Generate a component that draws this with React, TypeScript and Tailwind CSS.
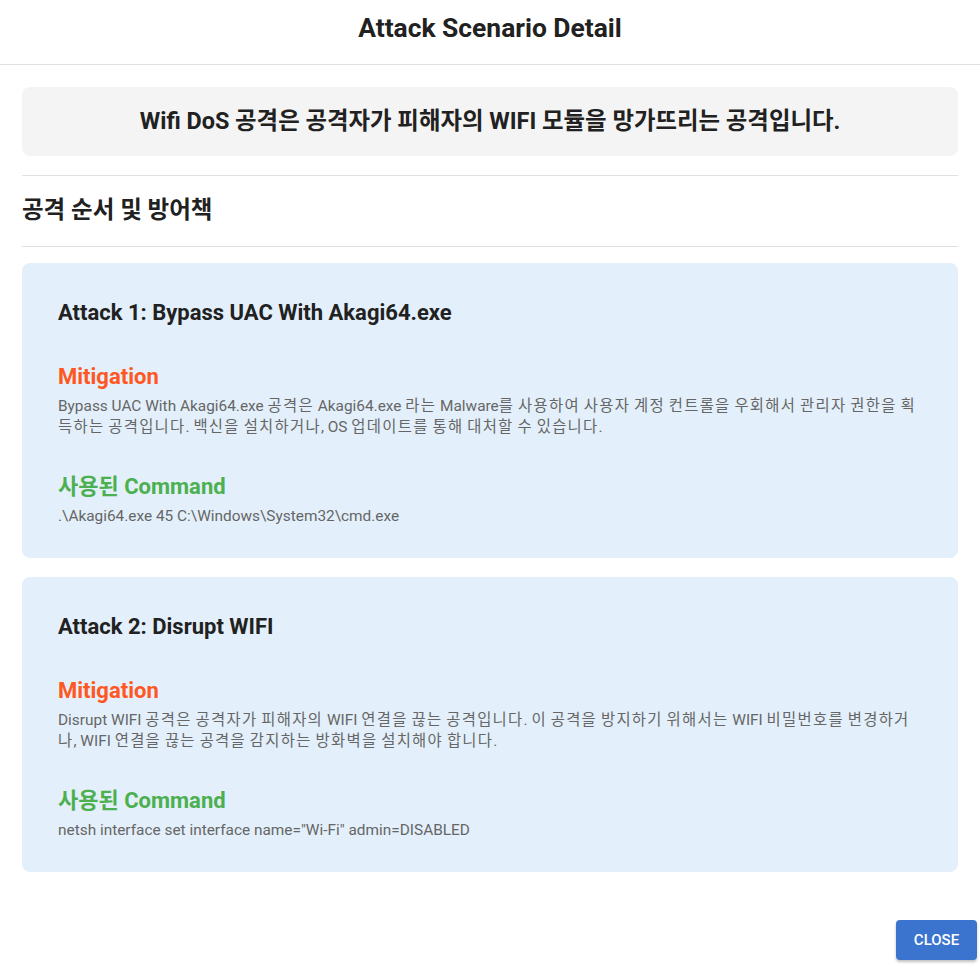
import type { ReactNode } from 'react'

const attacks = [
  {
    title: 'Attack 1: Bypass UAC With Akagi64.exe',
    mitigation:
      'Bypass UAC With Akagi64.exe 공격은 Akagi64.exe 라는 Malware를 사용하여 사용자 계정 컨트롤을 우회해서 관리자 권한을 획득하는 공격입니다. 백신을 설치하거나, OS 업데이트를 통해 대처할 수 있습니다.',
    command: '.\\Akagi64.exe 45 C:\\Windows\\System32\\cmd.exe',
  },
  {
    title: 'Attack 2: Disrupt WIFI',
    mitigation:
      'Disrupt WIFI 공격은 공격자가 피해자의 WIFI 연결을 끊는 공격입니다. 이 공격을 방지하기 위해서는 WIFI 비밀번호를 변경하거나, WIFI 연결을 끊는 공격을 감지하는 방화벽을 설치해야 합니다.',
    command: 'netsh interface set interface name="Wi-Fi" admin=DISABLED',
  },
]

// hangul in the body copy sits looser than latin
function Spaced({ text }: { text: string }): ReactNode {
  return text.split(/([가-힣]+)/).map((part, i) =>
    /[가-힣]/.test(part) ? (
      <span key={i} className="tracking-[1.3px]">
        {part}
      </span>
    ) : (
      part
    ),
  )
}

function AttackCard({ title, mitigation, command }: (typeof attacks)[number]) {
  return (
    <div className="bg-[#e3f0fb] rounded-lg pt-[36px] pb-[31px] px-9">
      <h3 className="text-[22px] leading-[28px] font-bold text-[#212121]">{title}</h3>
      <h4 className="mt-9 text-[22px] leading-[28px] font-bold text-[#ff5722]">Mitigation</h4>
      <p className="mt-[5px] text-[15.4px] leading-[21px] text-[#666] break-all">
        <Spaced text={mitigation} />
      </p>
      <h4 className="mt-[35px] text-[22px] leading-[28px] font-bold text-[#4caf50]">사용된 Command</h4>
      <p className="mt-[5px] text-[15.4px] leading-[21px] text-[#666]">{command}</p>
    </div>
  )
}

export default function App() {
  return (
    <div
      className="w-[980px] h-[965px] bg-white flex flex-col"
      style={{ fontFamily: 'Roboto, "Noto Sans CJK KR", sans-serif' }}
    >
      <header className="h-[65px] shrink-0 flex items-center justify-center border-b border-[#e0e0e0]">
        <h1 className="text-[26.4px] font-bold text-[#212121] -mt-[7px]">Attack Scenario Detail</h1>
      </header>

      <main className="px-[22px] pt-[22px] flex flex-col">
        <div className="bg-[#f4f4f4] rounded-lg h-[69px] flex items-center justify-center">
          <p className="text-[23.4px] font-bold text-[#212121]">
            Wifi DoS 공격은 공격자가 피해자의 WIFI 모듈을 망가뜨리는 공격입니다.
          </p>
        </div>

        <hr className="mt-[19px] border-[#e0e0e0]" />
        <h2 className="h-[70px] flex items-center text-[23.5px] font-semibold text-[#212121]">공격 순서 및 방어책</h2>
        <hr className="border-[#e0e0e0]" />

        <div className="mt-[16px] flex flex-col gap-[19px]">
          {attacks.map((a) => (
            <AttackCard key={a.title} {...a} />
          ))}
        </div>
      </main>

      <div className="mt-auto flex justify-end pr-[3px] pb-[5px]">
        <button className="w-[81px] h-[40px] rounded bg-[#3a74cf] text-white text-[15px] font-medium shadow-[0_2px_3px_rgba(0,0,0,0.25)]">
          CLOSE
        </button>
      </div>
    </div>
  )
}
